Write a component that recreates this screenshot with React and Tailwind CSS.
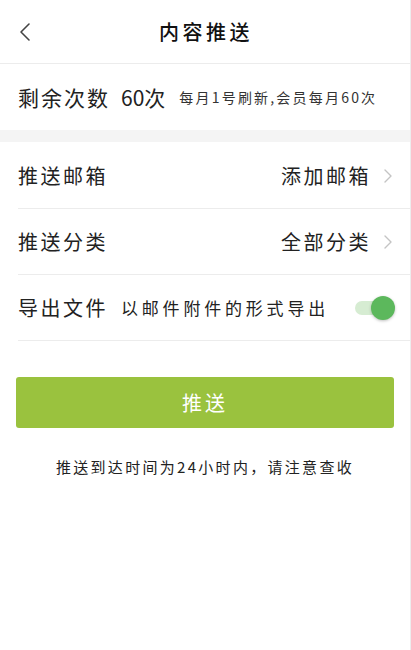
import React from "react";

const font = { fontFamily: '"Noto Sans CJK SC", "Noto Sans", sans-serif' };

function ChevronRight() {
  return (
    <svg width="10" height="16" viewBox="0 0 10 16" fill="none" className="ml-[12px]">
      <path d="M2 2 L8 8 L2 14" stroke="#c4c4c4" strokeWidth="1.4" strokeLinecap="round" strokeLinejoin="round" />
    </svg>
  );
}

function Row({ left, right, children }) {
  return (
    <div className="flex h-[66px] items-center border-b border-[#ececec] pr-[17px]">
      <span className="text-[20px] tracking-[2.5px] text-[#222]">{left}</span>
      {children}
      {right && (
        <div className="ml-auto flex items-center">
          <span className="text-[20px] tracking-[2.5px] text-[#222]">{right}</span>
          <ChevronRight />
        </div>
      )}
    </div>
  );
}

export default function App() {
  return (
    <div className="min-h-[650px] w-[411px] border-r border-[#ededed] bg-white" style={font}>
      {/* Header */}
      <div className="relative flex h-[64px] items-center justify-center border-b border-[#ececec]">
        <svg width="14" height="20" viewBox="0 0 14 20" fill="none" className="absolute left-[18px] top-[22px]">
          <path d="M11 2 L3 10 L11 18" stroke="#444" strokeWidth="1.6" strokeLinecap="round" strokeLinejoin="round" />
        </svg>
        <span className="ml-[2px] text-[20px] font-medium tracking-[3.5px] text-[#111]">内容推送</span>
      </div>

      {/* Remaining */}
      <div className="flex h-[66px] items-center pl-[18px] pt-[1px]">
        <span className="text-[21px] tracking-[2px] text-[#222]">剩余次数</span>
        <span className="ml-[11px] text-[21px] text-[#222]">60次</span>
        <span className="ml-[14px] text-[14px] tracking-[2.2px] text-[#333]">每月1号刷新,会员每月60次</span>
      </div>

      <div className="h-[12px] bg-[#f4f4f4]" />

      {/* Settings */}
      <div className="pl-[16px] pt-[1px]">
        <div className="pl-[2px]">
          <Row left="推送邮箱" right="添加邮箱" />
        </div>
        <div className="pl-[2px]">
          <Row left="推送分类" right="全部分类" />
        </div>
        <div className="pl-[2px]">
          <Row left="导出文件">
            <span className="ml-[13px] text-[17px] tracking-[3.8px] text-[#222]">以邮件附件的形式导出</span>
            <div className="relative ml-auto mr-[-2px] h-[24px] w-[40px]">
              <div className="absolute left-0 top-[5px] h-[14px] w-[36px] rounded-full bg-[#d6ecd2]" />
              <div className="absolute right-0 top-0 h-[24px] w-[24px] rounded-full bg-[#5cb85c] shadow-[0_1px_3px_rgba(0,0,0,0.25)]" />
            </div>
          </Row>
        </div>
      </div>

      {/* Button */}
      <div className="px-[16px] pt-[36px]">
        <button className="flex h-[51px] w-[378px] items-center justify-center rounded-[3px] bg-[#9ac23e] text-[20px] tracking-[3px] text-white">
          推送
        </button>
      </div>

      <p className="mt-[28px] text-center text-[15px] tracking-[2.3px] text-[#222]">
        推送到达时间为24小时内，请注意查收
      </p>
    </div>
  );
}
